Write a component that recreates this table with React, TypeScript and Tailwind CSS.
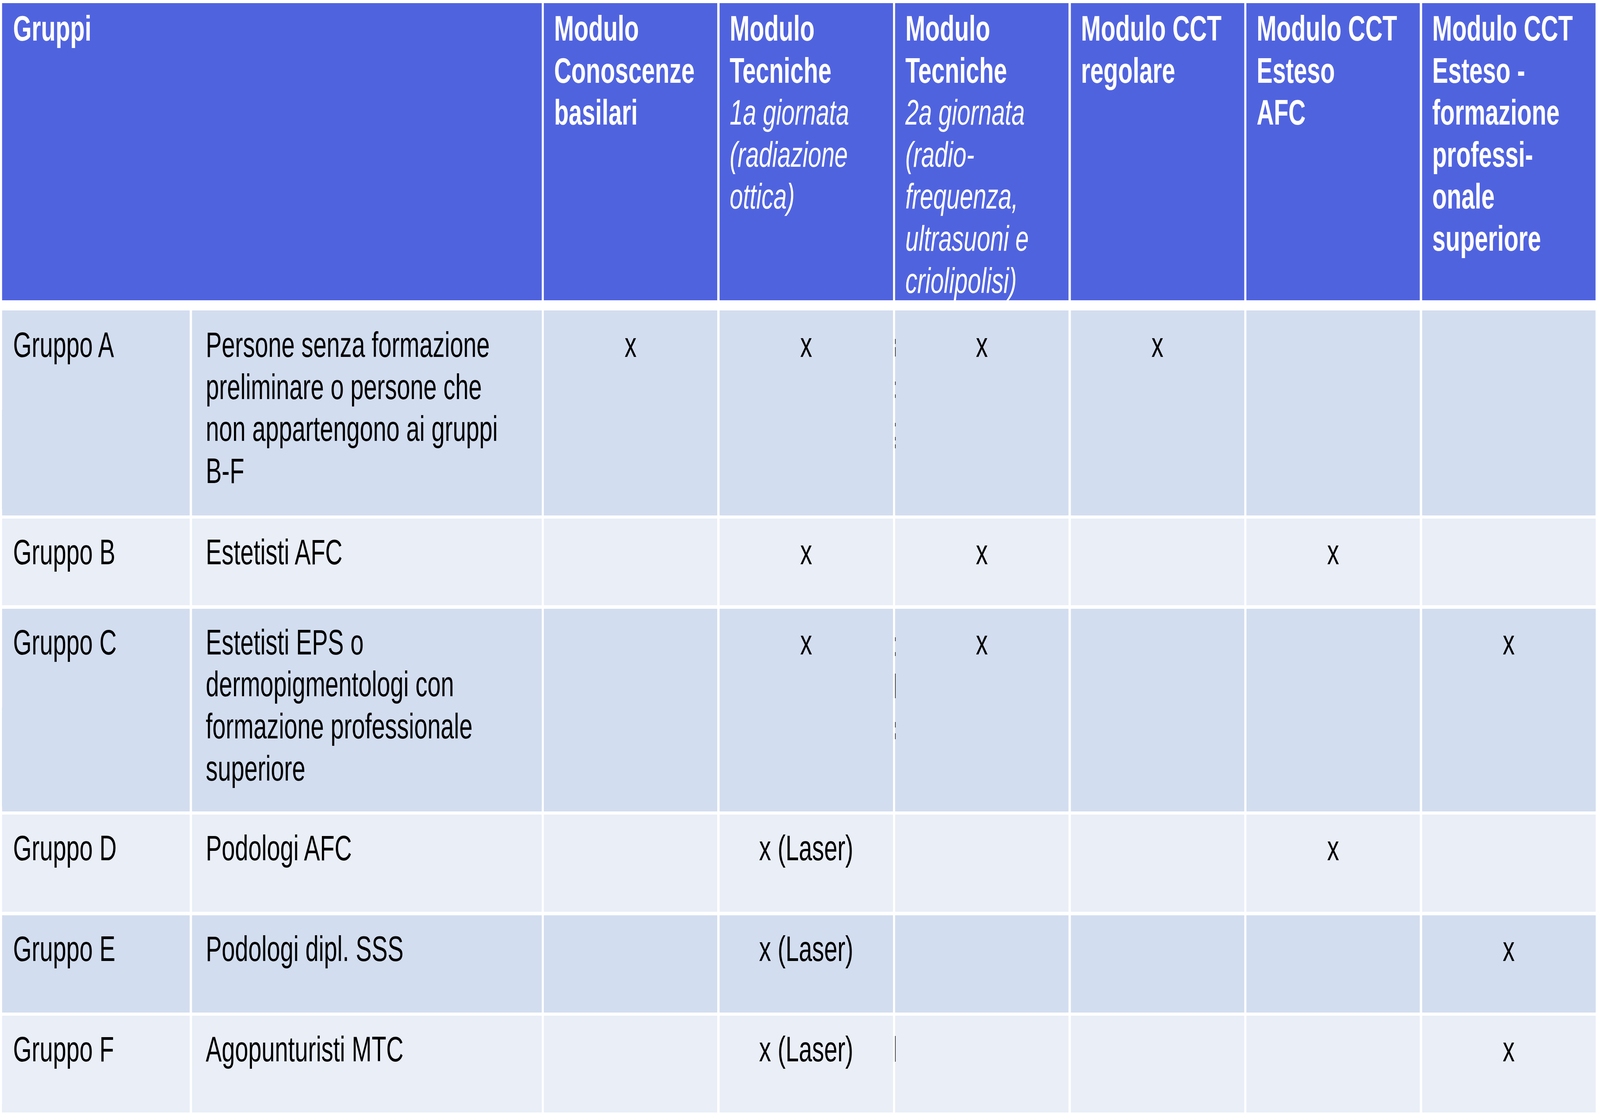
import React, { useEffect, useState } from 'react';

interface Row {
  group: string;
  desc: string[];
  cells: string[];
  tone: 'dark' | 'light';
  pad: string;
  marks: number[][];
}

const rows: Row[] = [
  {
    group: 'Gruppo A',
    desc: ['Persone senza formazione', 'preliminare o persone che', 'non appartengono ai gruppi', 'B-F'],
    cells: ['x', 'x', 'x', 'x', '', ''],
    tone: 'dark',
    pad: 'pt-[34px]',
    marks: [[73, 13], [94, 24], [182, 9], [215, 9], [288, 9], [324, 9], [343, 10]],
  },
  {
    group: 'Gruppo B',
    desc: ['Estetisti AFC'],
    cells: ['', 'x', 'x', '', 'x', ''],
    tone: 'light',
    pad: 'pt-[32px]',
    marks: [],
  },
  {
    group: 'Gruppo C',
    desc: ['Estetisti EPS o', 'dermopigmentologi con', 'formazione professionale', 'superiore'],
    cells: ['', 'x', 'x', '', '', 'x'],
    tone: 'dark',
    pad: 'pt-[32px]',
    marks: [[73, 10], [111, 10], [166, 63], [290, 14], [319, 15]],
  },
  {
    group: 'Gruppo D',
    desc: ['Podologi AFC'],
    cells: ['', 'x (Laser)', '', '', 'x', ''],
    tone: 'light',
    pad: 'pt-[32px]',
    marks: [],
  },
  {
    group: 'Gruppo E',
    desc: ['Podologi dipl. SSS'],
    cells: ['', 'x (Laser)', '', '', '', 'x'],
    tone: 'dark',
    pad: 'pt-[32px]',
    marks: [],
  },
  {
    group: 'Gruppo F',
    desc: ['Agopunturisti MTC'],
    cells: ['', 'x (Laser)', '', '', '', 'x'],
    tone: 'light',
    pad: 'pt-[32px]',
    marks: [[52, 66]],
  },
];

const headers: { bold: string[]; italic?: string[] }[] = [
  { bold: ['Modulo', 'Conoscenze', 'basilari'] },
  { bold: ['Modulo', 'Tecniche'], italic: ['1a giornata', '(radiazione', 'ottica)'] },
  { bold: ['Modulo', 'Tecniche'], italic: ['2a giornata', '(radio-', 'frequenza,', 'ultrasuoni e', 'criolipolisi)'] },
  { bold: ['Modulo CCT', 'regolare'] },
  { bold: ['Modulo CCT', 'Esteso', 'AFC'] },
  { bold: ['Modulo CCT', 'Esteso -', 'formazione', 'professi-', 'onale', 'superiore'] },
];

// the table is drawn at its design width and fitted to the window width
const DESIGN_WIDTH = 6099;

const gridCols = 'grid grid-cols-[715px_1333px_661px_661px_661px_661px_661px_661px] gap-x-[8.5px]';

export default function App() {
  const [fit, setFit] = useState(() => window.innerWidth / DESIGN_WIDTH);

  useEffect(() => {
    const onResize = () => setFit(window.innerWidth / DESIGN_WIDTH);
    window.addEventListener('resize', onResize);
    return () => window.removeEventListener('resize', onResize);
  }, []);

  return (
    <div className="min-h-screen w-full overflow-hidden bg-white">
      <div
        className="w-[6099px] origin-top-left pl-[8px] pt-[8px] font-['Liberation_Sans',Arial,sans-serif] text-[91px] leading-[107.6px] text-black"
        style={{ transform: `scaleX(${fit})` }}
      >
        {/* header */}
        <div className={`${gridCols} h-[761px]`}>
          <div className="col-span-2 bg-[#5063df] pl-[42px] pt-[11px] font-bold text-white">Gruppi</div>
          {headers.map((h, i) => (
            <div key={i} className="overflow-hidden whitespace-nowrap bg-[#5063df] pl-[39px] pt-[11px] text-white">
              {h.bold.map((l) => (
                <div key={l} className="font-bold">{l}</div>
              ))}
              {h.italic?.map((l) => (
                <div key={l} className="italic">{l}</div>
              ))}
            </div>
          ))}
        </div>

        {/* body */}
        <div className={`${gridCols} mt-[26px] grid-rows-[525px_222px_519px_249px_249px_248px] gap-y-[8.4px]`}>
          {rows.map((r) => {
            const bg = r.tone === 'dark' ? 'bg-[#d2ddef]' : 'bg-[#e9eef7]';
            return (
              <React.Fragment key={r.group}>
                <div className={`${bg} ${r.pad} pl-[42px]`}>{r.group}</div>
                <div className={`${bg} ${r.pad} whitespace-nowrap pl-[53px]`}>
                  {r.desc.map((l) => (
                    <div key={l}>{l}</div>
                  ))}
                </div>
                {r.cells.map((c, i) => (
                  <div key={i} className={`relative ${bg} ${r.pad} whitespace-nowrap text-center`}>
                    {c}
                    {i === 2 &&
                      r.marks.map(([top, h], k) => (
                        <span
                          key={k}
                          className="absolute left-0 w-[2px] bg-black"
                          style={{ top, height: h }}
                        />
                      ))}
                  </div>
                ))}
              </React.Fragment>
            );
          })}
        </div>
      </div>
    </div>
  );
}
